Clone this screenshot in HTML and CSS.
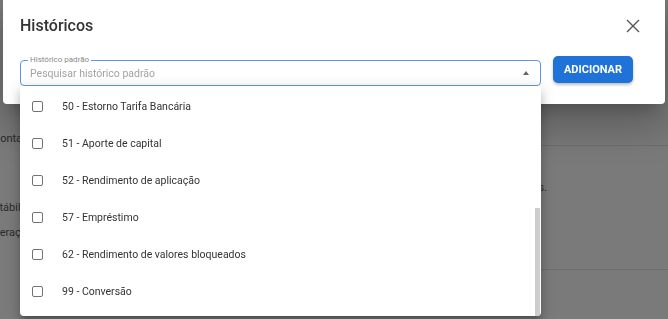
FILE: index.html
```html
<!DOCTYPE html>
<html>
  <head>
    <title>Históricos</title>
    <link rel="stylesheet" href="styles.css">
  </head>
  <body>
    <!-- Page behind the dialog -->
    <main class="page">
      <div class="pg-head"></div>
      <div class="pg-line pg-cut-1">Conta</div>
      <div class="pg-rule"></div>
      <div class="pg-note">Nenhum lançamento contábil encontrado para os filtros selecionados.</div>
      <div class="pg-line pg-cut-2 pg-gap">Contábil</div>
      <div class="pg-line pg-cut-3 pg-gap-sm">Operação</div>
      <div class="pg-rule pg-rule-2"></div>
    </main>

    <div class="backdrop"></div>

    <!-- Dialog -->
    <div class="dialog">
      <div class="dialog-header">
        <h2 class="dialog-title">Históricos</h2>
        <button class="close-btn" aria-label="Fechar">
          <svg width="14" height="14" viewBox="0 0 14 14">
            <path d="M1 1 L13 13 M13 1 L1 13" stroke="#555" stroke-width="1.4" fill="none"/>
          </svg>
        </button>
      </div>
      <div class="dialog-body">
        <div class="field">
          <div class="field-box">
            <span class="field-label">Histórico padrão</span>
            <input type="text" class="field-input" placeholder="Pesquisar histórico padrão">
            <span class="field-arrow"></span>

            <!-- Open options list -->
            <div class="options">
              <div class="option"><span class="check"></span>50 - Estorno Tarifa Bancária</div>
              <div class="option"><span class="check"></span>51 - Aporte de capital</div>
              <div class="option"><span class="check"></span>52 - Rendimento de aplicação</div>
              <div class="option"><span class="check"></span>57 - Empréstimo</div>
              <div class="option"><span class="check"></span>62 - Rendimento de valores bloqueados</div>
              <div class="option"><span class="check"></span>99 - Conversão</div>
              <div class="scroll-thumb"></div>
            </div>
          </div>
        </div>
        <button class="add-btn">ADICIONAR</button>
      </div>
    </div>
  </body>
</html>
```

FILE: styles.css
```css
/* Base */
body {
  margin: 0;
  background-color: #f5f5f5;
  font-family: Roboto, "Liberation Sans", sans-serif;
  color: #333;
  overflow: hidden;
  height: 319px;
}

/* Page behind the overlay */
.page {
  display: flex;
  flex-direction: column;
}

.pg-head {
  height: 133px;
}

.pg-line {
  font-size: 11px;
  line-height: 12px;
  color: #555;
  white-space: nowrap;
}

.pg-cut-1 {
  margin-left: -7px;
}

.pg-cut-2 {
  margin-left: -20px;
}

.pg-cut-3 {
  margin-left: -14px;
}

.pg-gap {
  margin-top: 8px;
}

.pg-gap-sm {
  margin-top: 13px;
}

.pg-rule {
  height: 1px;
  margin-left: 200px;
  background-color: #dcdcdc;
}

.pg-rule-2 {
  margin-top: 30px;
}

.pg-note {
  width: 547px;
  margin-top: 36px;
  font-size: 11px;
  line-height: 12px;
  color: #555;
  text-align: right;
  white-space: nowrap;
  overflow: hidden;
}

.backdrop {
  position: fixed;
  inset: 0;
  background-color: rgba(0, 0, 0, 0.5);
}

/* Dialog */
.dialog {
  position: absolute;
  top: 0;
  left: 3px;
  right: 3px;
  height: 104px;
  background-color: #fff;
  border-radius: 0 0 4px 4px;
  box-shadow: 0 11px 15px -7px rgba(0,0,0,0.2), 0 24px 38px 3px rgba(0,0,0,0.14), 0 9px 46px 8px rgba(0,0,0,0.12);
}

.dialog-header {
  display: flex;
  align-items: center;
  justify-content: space-between;
  padding: 14px 20px 0 17px;
}

.dialog-title {
  margin: 0;
  font-size: 16px;
  font-weight: 500;
  line-height: 24px;
  color: #333;
}

.close-btn {
  width: 24px;
  height: 24px;
  padding: 0;
  border: none;
  background: none;
  display: flex;
  align-items: center;
  justify-content: center;
}

.dialog-body {
  display: flex;
  align-items: flex-start;
  gap: 12px;
  padding: 20px 32px 0 17px;
}

/* Autocomplete field */
.field {
  flex: 1;
  padding-top: 2px;
}

.field-box {
  position: relative;
  display: flex;
  align-items: center;
  height: 24px;
  border: 1px solid #5f96e2;
  border-radius: 4px;
}

.field-label {
  position: absolute;
  top: -6px;
  left: 7px;
  padding: 0 2px;
  background-color: #fff;
  font-size: 8px;
  line-height: 10px;
  color: #8a8a8a;
}

.field-input {
  flex: 1;
  height: 22px;
  padding: 0 0 0 9px;
  border: none;
  outline: none;
  background: none;
  font-family: Roboto, "Liberation Sans", sans-serif;
  font-size: 10.5px;
  color: #333;
}

.field-input::placeholder {
  color: #a3a3a3;
}

.field-arrow {
  width: 0;
  height: 0;
  margin-right: 11px;
  border-left: 3.5px solid transparent;
  border-right: 3.5px solid transparent;
  border-bottom: 4px solid #666;
}

/* Options list */
.options {
  position: absolute;
  top: 100%;
  left: -1px;
  right: -1px;
  height: 228px;
  padding-top: 2px;
  margin-top: 1px;
  background-color: #fff;
  border-radius: 0 0 4px 4px;
  box-shadow: 0 5px 5px -3px rgba(0,0,0,0.2), 0 8px 10px 1px rgba(0,0,0,0.14), 0 3px 14px 2px rgba(0,0,0,0.12);
  overflow: hidden;
}

.option {
  display: flex;
  align-items: center;
  height: 37px;
  padding-left: 12px;
  font-size: 10.5px;
  color: #333;
}

.check {
  width: 9px;
  height: 9px;
  margin-right: 19px;
  border: 1.5px solid #737373;
  border-radius: 2px;
}

.scroll-thumb {
  position: absolute;
  right: 1px;
  bottom: 0;
  width: 5px;
  height: 108px;
  background-color: #cdcdcd;
}

/* Add button */
.add-btn {
  width: 80px;
  height: 27px;
  margin-top: -2px;
  border: none;
  border-radius: 5px;
  background-color: #1f72d8;
  color: #fff;
  font-family: Roboto, "Liberation Sans", sans-serif;
  font-size: 11px;
  font-weight: 700;
  box-shadow: 0 2px 3px rgba(0,0,0,0.25);
}
```
